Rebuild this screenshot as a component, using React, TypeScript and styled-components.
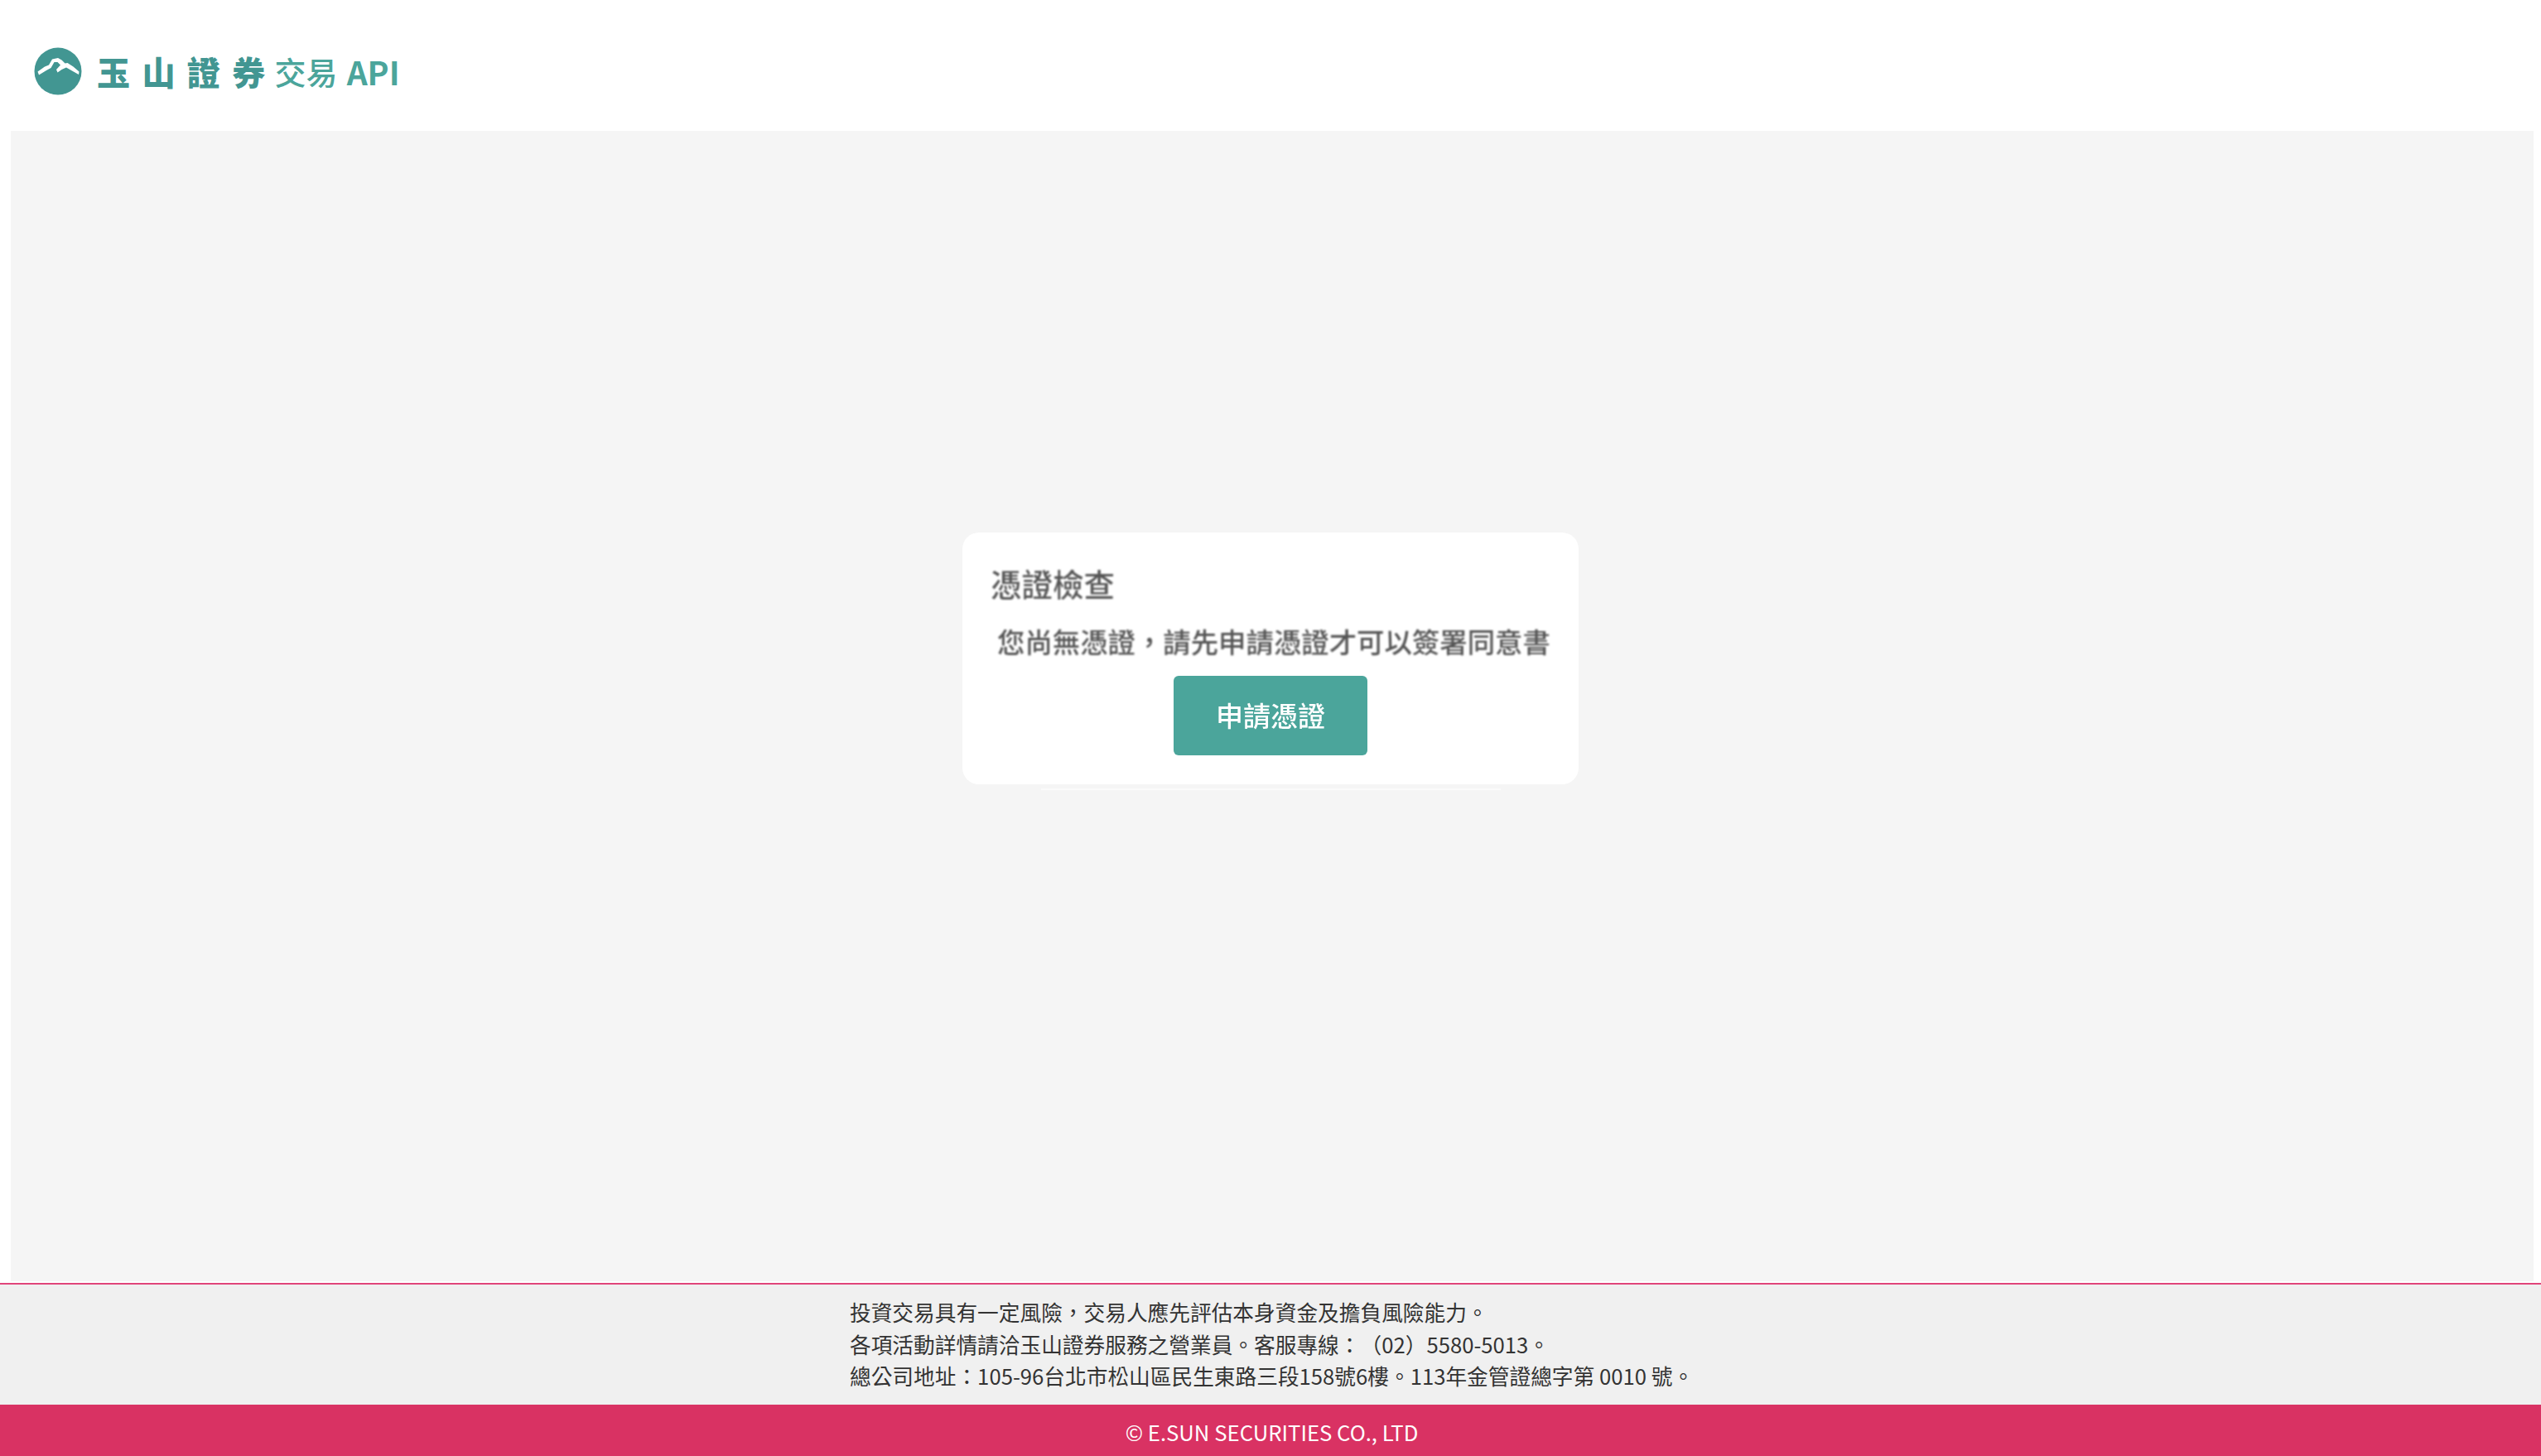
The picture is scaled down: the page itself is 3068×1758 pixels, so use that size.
import styled, { createGlobalStyle } from 'styled-components';

const GlobalStyle = createGlobalStyle`
  html, body {
    margin: 0;
    padding: 0;
    background: #fff;
    font-family: "Noto Sans CJK TC", "Noto Sans", sans-serif;
  }
`;

const Page = styled.div`
  display: flex;
  flex-direction: column;
  height: 100vh;
  overflow: hidden;
`;

const Header = styled.header`
  flex: none;
  height: 158px;
  padding-left: 41px;
  box-sizing: border-box;
  display: flex;
  align-items: center;
  padding-top: 14px;
`;

const LogoMark = styled.svg`
  width: 58px;
  height: 58px;
  flex: none;
  margin-right: 18px;
`;

const Brand = styled.span`
  font-size: 40px;
  line-height: 1;
  font-weight: 900;
  letter-spacing: 14.4px;
  color: #429692;
  margin-right: -3px;
`;

const Product = styled.span`
  font-size: 38px;
  line-height: 1;
  font-weight: 500;
  color: #4ba59b;
`;

const ProductLatin = styled(Product)`
  font-size: 39px;
  font-weight: 600;
  margin-left: 11px;
`;

const Main = styled.main`
  flex: 1;
  margin: 0 9px 2px 13px;
  background: #f5f5f5;
  display: flex;
  justify-content: center;
  align-items: flex-start;
  padding-top: 485px;
  padding-right: 4px;
`;

const Card = styled.section`
  position: relative;
  width: 744px;
  height: 304px;
  box-sizing: border-box;
  background: #fff;
  border-radius: 20px;
  padding: 34px 34px 0;
  display: flex;
  flex-direction: column;

  &::after {
    content: '';
    position: absolute;
    left: 95px;
    right: 94px;
    bottom: -7px;
    height: 2px;
    background: #fbfbfb;
  }
`;

const Title = styled.h2`
  margin: 0;
  font-size: 37.5px;
  line-height: 54px;
  font-weight: 500;
  color: #555;
  filter: blur(0.9px);
`;

const Message = styled.p`
  margin: 18px 0 0;
  padding-left: 8px;
  font-size: 33.4px;
  line-height: 50px;
  font-weight: 500;
  color: #555;
  white-space: nowrap;
  filter: blur(0.9px);
`;

const PrimaryButton = styled.button`
  align-self: center;
  margin-top: 17px;
  width: 234px;
  height: 96px;
  border: 0;
  border-radius: 6px;
  background: #4ba59b;
  color: #fff;
  font-family: inherit;
  font-size: 33px;
  font-weight: 500;
  padding: 0 0 3px;
`;

const ButtonLabel = styled.span`
  display: block;
  filter: blur(0.7px);
`;

const Notice = styled.div`
  flex: none;
  height: 147px;
  box-sizing: border-box;
  border-top: 2px solid #e0457a;
  background: #f0f0f0;
  padding: 14px 0 0 1026px;
`;

const NoticeLine = styled.div`
  font-size: 25.7px;
  line-height: 38.6px;
  color: #333;
  white-space: nowrap;
  text-spacing-trim: space-all;
`;

const Copyright = styled.footer`
  flex: none;
  height: 62px;
  background: #d93263;
  color: #fff;
  font-size: 25.7px;
  display: flex;
  align-items: center;
  justify-content: center;
  padding: 2px 0 0 3px;
  box-sizing: border-box;
`;

const notices = [
  '投資交易具有一定風險，交易人應先評估本身資金及擔負風險能力。',
  '各項活動詳情請洽玉山證券服務之營業員。客服專線：（02）5580-5013。',
  '總公司地址：105-96台北市松山區民生東路三段158號6樓。113年金管證總字第 0010 號。',
];

export default function App() {
  return (
    <Page>
      <GlobalStyle />
      <Header>
        <LogoMark viewBox="0 0 58 58">
          <circle cx="29" cy="29" r="28.5" fill="#429692" />
          <path
            d="M4.5 29.5 L13 23.5 L18 21.5 L22 14.5 L29 13 L33.5 15.5 L37.5 19.5 L40.5 19 L47.5 23.5 L54.5 29.5 L54 33 L46 28.5 L39 24.5 L33.5 27 L28.5 30.5 L27 27 L32 21.5 L28.5 18 L24.5 18 L20.5 25 L15 28 L6 33.5 Z"
            fill="#fff"
          />
        </LogoMark>
        <Brand>玉山證券</Brand>
        <Product>交易</Product>
        <ProductLatin>API</ProductLatin>
      </Header>
      <Main>
        <Card>
          <Title>憑證檢查</Title>
          <Message>您尚無憑證，請先申請憑證才可以簽署同意書</Message>
          <PrimaryButton>
            <ButtonLabel>申請憑證</ButtonLabel>
          </PrimaryButton>
        </Card>
      </Main>
      <Notice>
        {notices.map((line) => (
          <NoticeLine key={line}>{line}</NoticeLine>
        ))}
      </Notice>
      <Copyright>© E.SUN SECURITIES CO., LTD</Copyright>
    </Page>
  );
}
